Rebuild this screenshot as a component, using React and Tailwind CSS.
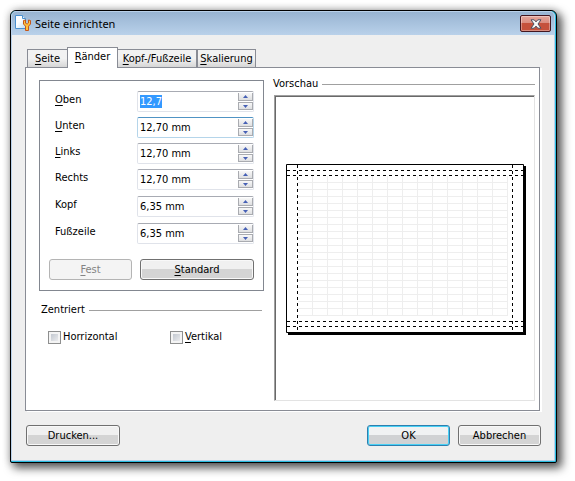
import { useEffect, useRef } from "react";

const MARGINS = [
  { id: "oben", key: "O", rest: "ben", value: "12,7", selected: true },
  { id: "unten", key: "U", rest: "nten", value: "12,70 mm", hot: true },
  { id: "links", key: "L", rest: "inks", value: "12,70 mm" },
  { id: "rechts", key: "", rest: "Rechts", value: "12,70 mm" },
  { id: "kopf", key: "", rest: "Kopf", value: "6,35 mm" },
  { id: "fusszeile", key: "", rest: "Fußzeile", value: "6,35 mm" },
];

const COLUMNS = Array.from({ length: 14 }, (_, i) => 26.5 + i * 15);
const ROWS = Array.from({ length: 20 }, (_, i) => 18.5 + i * 7);

function Key({ children }) {
  return <span className="underline decoration-1 underline-offset-2">{children}</span>;
}

function PageIcon() {
  return (
    <svg width="17" height="17" viewBox="0 0 17 17" aria-hidden="true">
      <defs>
        <linearGradient id="sheet" x1="0" y1="0" x2="1" y2="1">
          <stop offset="0.4" stopColor="#ffffff" />
          <stop offset="1" stopColor="#b5dcf8" />
        </linearGradient>
      </defs>
      <path d="M.5 .5h7l3 3v10h-10z" fill="url(#sheet)" stroke="#4a90cf" />
      <path d="M7.5 .5v3h3" fill="#d7ecfb" stroke="#4a90cf" />
      <path
        d="M8.500 5.500v3.500l2 2.200v4.300h3v-4.300l2-2.200v-3.500l-2-.5v3l-.8.800h-1.400l-.8-.8v-3z"
        fill="#ffc23c"
        stroke="#c4561a"
      />
    </svg>
  );
}

function CloseIcon() {
  return (
    <svg width="12" height="10" viewBox="0 0 12 10" aria-hidden="true">
      <path
        d="M1 .8h3.200L6 2.900 7.800.8H11L8 5l3 4.200H7.800L6 7.100 4.200 9.200H1L4 5z"
        fill="#f7f7f7"
        stroke="#4c5062"
      />
    </svg>
  );
}

function SpinButton({ down, label }) {
  return (
    <button
      type="button"
      aria-label={label}
      className={`flex h-2 w-full items-center justify-center border-[#a9abb0] bg-linear-to-b from-[#f8f8f8] to-[#dedfe1] ${
        down ? "border" : "border-x border-b"
      }`}
    >
      <svg width="5" height="3" viewBox="0 0 5 3" aria-hidden="true">
        <path d={down ? "M0 0h5L2.500 3z" : "M0 3h5L2.500 0z"} fill="#4660b5" />
      </svg>
    </button>
  );
}

function MarginField({ field }) {
  const input = useRef(null);
  useEffect(() => {
    if (field.selected) input.current.select();
  }, [field.selected]);
  return (
    <div className="flex items-center">
      <label htmlFor={field.id} className="w-[82px] pb-[3px]">
        {field.key && <Key>{field.key}</Key>}
        {field.rest}
      </label>
      <div
        className={`flex h-[21px] flex-1 items-center rounded-xs border bg-white ${
          field.hot
            ? "border-[#b5d5ea] border-t-[#4f93c4]"
            : "border-[#e0e3ea] border-t-[#a8abb3]"
        }`}
      >
        <input
          ref={input}
          id={field.id}
          type="text"
          defaultValue={field.value}
          className="h-[15px] w-full min-w-0 flex-1 bg-transparent pl-0.5 caret-transparent outline-none selection:bg-[#3399ff] selection:text-white"
        />
        <div className="flex w-[15px] flex-col gap-px">
          <SpinButton label="Wert erhöhen" />
          <SpinButton down label="Wert verringern" />
        </div>
      </div>
    </div>
  );
}

function PushButton({ children, className = "", primary, disabled }) {
  const look = disabled
    ? "border-[#b4b4b4] bg-[#f4f4f4] text-[#838383]"
    : primary
      ? "border-[#2f7fae] from-[#f0f2f3] from-50% to-[#d0d2d4] to-50% bg-linear-to-b shadow-[inset_0_0_0_1px_#48d0f5]"
      : "border-[#707070] from-[#f0f0f0] from-50% to-[#d4d4d4] to-50% bg-linear-to-b shadow-[inset_0_0_0_1px_#f8f8f8]";
  return (
    <button
      type="button"
      disabled={disabled}
      className={`h-[21px] rounded-[3px] border ${look} ${className}`}
    >
      {children}
    </button>
  );
}

function Heading({ children }) {
  return (
    <div className="flex h-3.5 items-center gap-1">
      <h2>{children}</h2>
      <div className="h-px flex-1 bg-[#a0a0a0]" />
    </div>
  );
}

function CheckBox({ id, children, className }) {
  return (
    <div className={`flex items-center gap-0.5 ${className}`}>
      <input
        id={id}
        type="checkbox"
        className="size-[13px] appearance-none border border-[#8e8f8f] bg-linear-to-br from-[#b8bec8] to-[#f6f6f6] shadow-[inset_0_0_0_2px_#f4f4f4] checked:bg-[#4660b5]"
      />
      <label htmlFor={id}>{children}</label>
    </div>
  );
}

function Tab({ children, active, className = "" }) {
  return (
    <button
      type="button"
      role="tab"
      aria-selected={!!active}
      className={`border-t border-[#898c95] whitespace-nowrap ${
        active
          ? "-mb-px h-[21px] border-x bg-white pb-0.5"
          : "h-[18px] bg-linear-to-b from-[#f2f2f2] from-50% to-[#d6d6d6] pt-px"
      } ${className}`}
    >
      {children}
    </button>
  );
}

function PagePreview() {
  return (
    <svg width="240" height="171" viewBox="0 0 240 171" role="img" aria-label="Seitenvorschau">
      <path d="M2 2h238v169H2z" fill="#000" />
      <path d="M.5 .5h237v168H.5z" fill="#fff" stroke="#000" />
      <g stroke="#eeeeee">
        {COLUMNS.map((x) => (
          <path key={x} d={`M${x} 12V152`} />
        ))}
        {ROWS.map((y) => (
          <path key={y} d={`M12 ${y}H222`} />
        ))}
      </g>
      <g stroke="#000" strokeDasharray="3 3">
        <path d="M1 6.500H237M1 11.500H237M1 157.500H237M1 162.500H237" />
        <path d="M11.500 1V168M226.500 1V168" />
      </g>
    </svg>
  );
}

export default function App() {
  return (
    <div className="bg-white pt-2.5 pr-[18px] pb-[18px] pl-2.5 font-['DejaVu_Sans_Condensed','DejaVu_Sans',sans-serif] text-[11px] leading-[14px] text-black">
      <main className="rounded-t-md rounded-b-xs border border-black bg-[#29bde0] pr-px pb-px shadow-[4px_4px_10px_1px_rgba(0,0,0,0.65),0_0_8px_rgba(0,0,0,0.2)]">
        <div className="rounded-t-[5px] border border-[#b9d1ea] bg-[#efefef] pl-px">
          <header className="-ml-px flex h-[23px] items-center rounded-t-[4px] bg-linear-to-b from-[#98b4d2] to-[#b9d1ea] pr-[3px] pl-[3px]">
            <PageIcon />
            <h1 className="flex-1 pl-[3px] font-['Noto_Sans',sans-serif] text-[11px] leading-[15px]">
              Seite einrichten
            </h1>
            <button
              type="button"
              aria-label="Schließen"
              className="flex h-[17px] w-[31px] items-center justify-center rounded-xs border border-[#43161f] bg-linear-to-b from-[#e6a79c] from-0% via-[#d98a7d] via-50% to-[#c5513c] to-50% shadow-[inset_0_0_0_1px_rgba(255,255,255,0.35)]"
            >
              <CloseIcon />
            </button>
          </header>

          <div className="px-3 pt-3 pb-3.5">
            <div role="tablist" className="relative flex items-end pl-0.5">
              <Tab className="w-10 border-l">
                <Key>S</Key>eite
              </Tab>
              <Tab active className="w-[51px]">
                <Key>R</Key>änder
              </Tab>
              <Tab className="w-[79px] border-r">
                <Key>K</Key>opf-/Fußzeile
              </Tab>
              <Tab className="w-[59px] border-x">
                <Key>S</Key>kalierung
              </Tab>
            </div>

            <section className="mr-0.5 flex gap-[9px] border border-[#898c95] bg-white pt-[9px] pr-1 pb-[9px] pl-[13px] shadow-[2px_1px_0_#ffffff]">
              <div className="w-[225px] pt-[3px]">
                <div className="flex flex-col border border-[#828790] px-[9px] py-2.5">
                  <div className="flex flex-col gap-[5px] pl-1.5">
                    {MARGINS.slice(0, 4).map((f) => (
                      <MarginField key={f.id} field={f} />
                    ))}
                  </div>
                  <div className="flex flex-col gap-1.5 pt-1.5 pl-1.5">
                    {MARGINS.slice(4).map((f) => (
                      <MarginField key={f.id} field={f} />
                    ))}
                  </div>
                  <div className="flex gap-2 pt-[15px]">
                    <PushButton disabled className="w-[83px]">
                      <Key>F</Key>est
                    </PushButton>
                    <PushButton className="flex-1">
                      <Key>S</Key>tandard
                    </PushButton>
                  </div>
                </div>

                <div className="px-0.5 pt-3">
                  <Heading>Zentriert</Heading>
                  <div className="flex pt-[13px] pl-[7px]">
                    <CheckBox id="horizontal" className="w-[122px]">
                      Horrizontal
                    </CheckBox>
                    <CheckBox id="vertikal" className="flex-1">
                      <Key>V</Key>ertikal
                    </CheckBox>
                  </div>
                </div>
              </div>

              <div className="flex flex-1 flex-col gap-1">
                <Heading>Vorschau</Heading>
                <div className="ml-px flex min-h-[306px] items-center justify-center border border-t-[#a0a0a0] border-r-[#e3e3e3] border-b-[#e3e3e3] border-l-[#a0a0a0] pt-[3px] pl-[3px] shadow-[inset_1px_1px_0_#696969]">
                  <PagePreview />
                </div>
              </div>
            </section>

            <footer className="flex gap-2 px-px pt-3.5">
              <PushButton className="w-[94px]">Drucken...</PushButton>
              <PushButton primary className="ml-auto w-[83px]">
                OK
              </PushButton>
              <PushButton className="w-[83px]">Abbrechen</PushButton>
            </footer>
          </div>
        </div>
      </main>
    </div>
  );
}
